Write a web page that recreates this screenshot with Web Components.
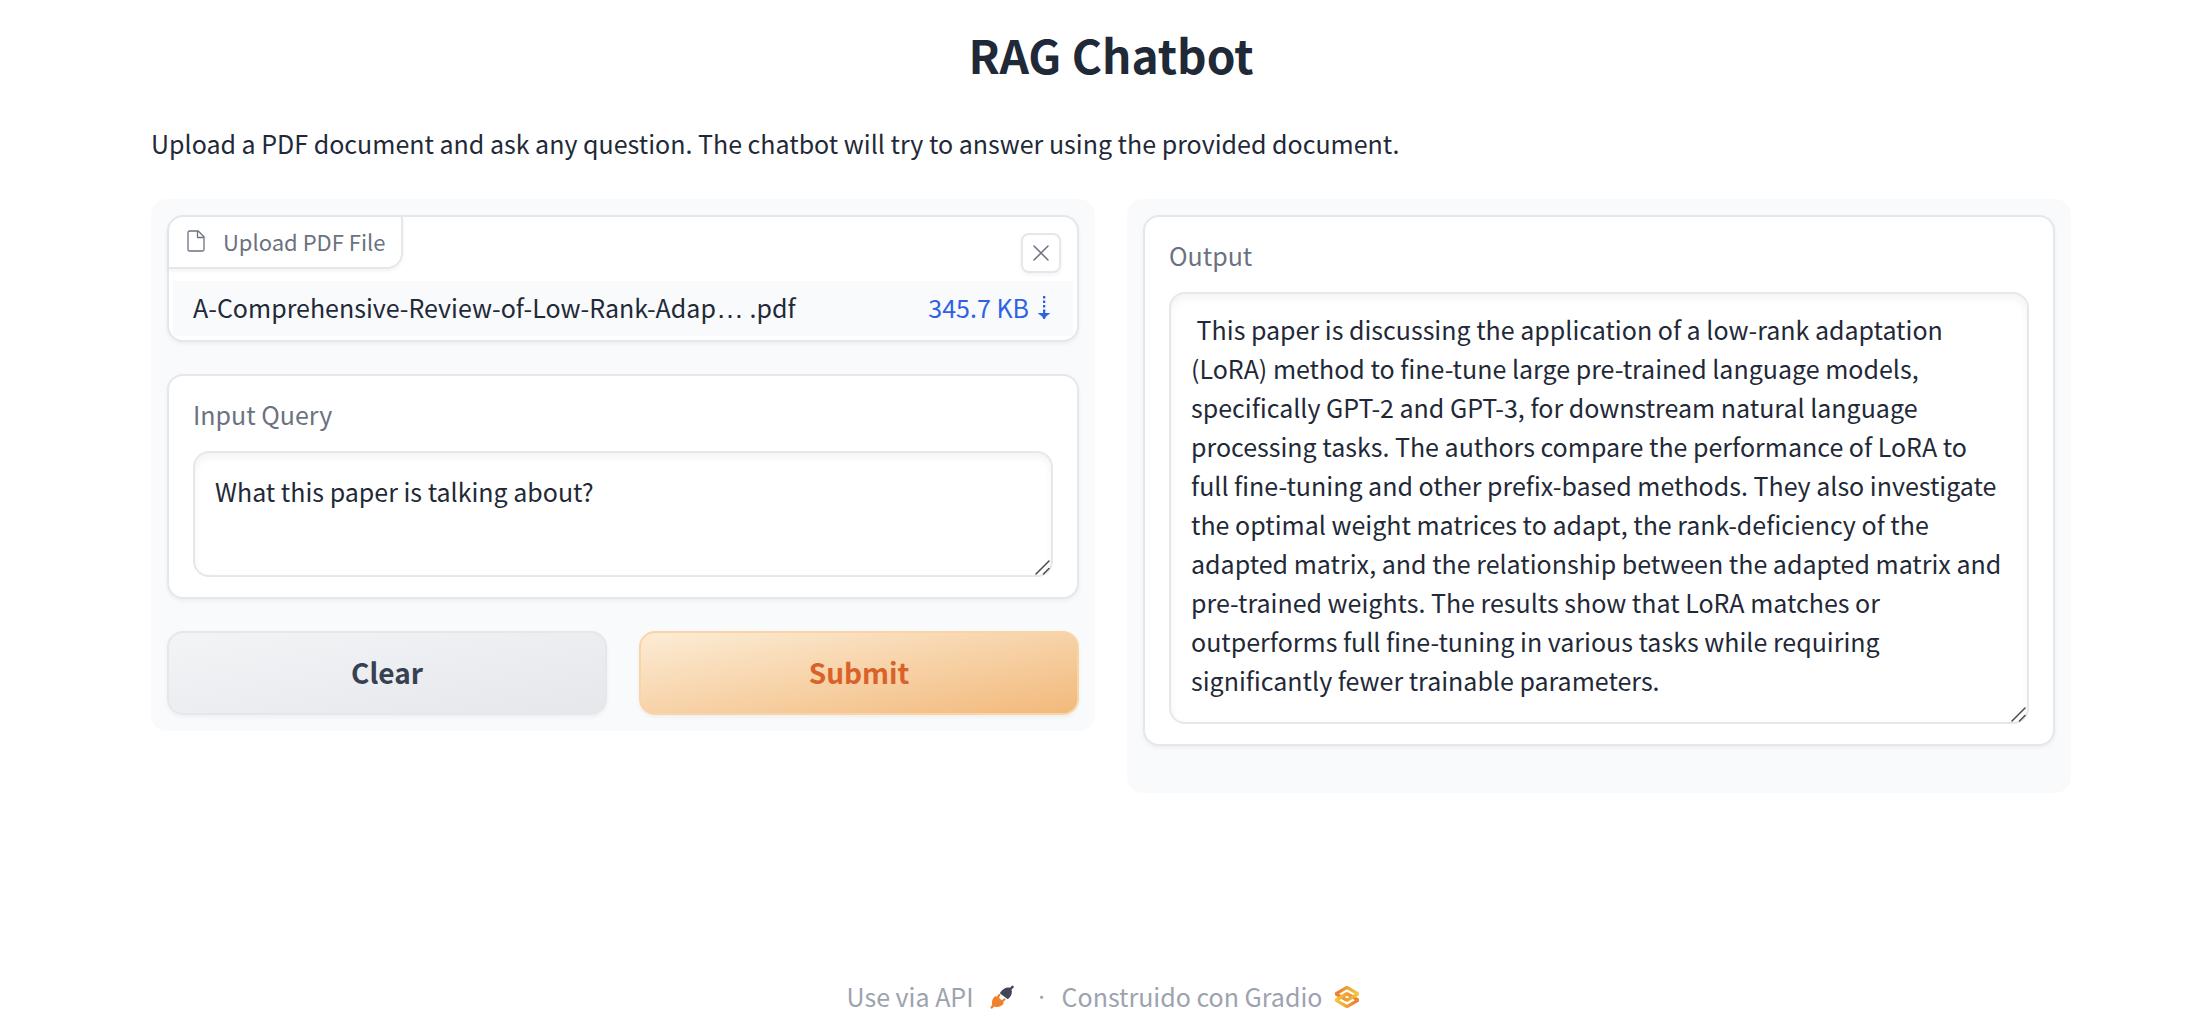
<!DOCTYPE html>
<html lang="en">
<head>
<meta charset="utf-8">
<title>RAG Chatbot</title>
<style>
  html { height: 100%; }
  body {
    margin: 0;
    min-height: 100%;
    background: #fff;
    color: #1f2937;
    font: 400 25px/39px "Noto Sans CJK SC", "Noto Sans", sans-serif;
    --line: #e5e7eb;
    --muted: #6b7280;
    --radius: 16px;
  }
</style>
</head>
<body>
<rag-app></rag-app>
<script>
const define = (name, html, setup) => {
  const template = document.createElement('template');
  template.innerHTML = '<style>*{box-sizing:border-box}</style>' + html;
  customElements.define(name, class extends HTMLElement {
    connectedCallback() {
      if (this.shadowRoot) return;
      this.attachShadow({ mode: 'open' }).append(template.content.cloneNode(true));
      if (setup) setup(this, this.shadowRoot);
    }
  });
};

define('rag-panel', `
  <style>
    :host { display: flex; flex-direction: column; gap: 32px; flex: 1 1 0; min-width: 0; box-sizing: border-box;
            padding: 16px; background: #f9fafc; border-radius: var(--radius); }
  </style>
  <slot></slot>`);

define('rag-card', `
  <style>
    :host { display: block; box-sizing: border-box; background: #fff; border: 2px solid var(--line);
            border-radius: var(--radius); box-shadow: 0 2px 4px rgba(0,0,0,.05); }
  </style>
  <slot></slot>`);

define('rag-file', `
  <style>
    :host { display: block; }
    .top { display: flex; justify-content: space-between; align-items: flex-start; height: 64px; }
    .label { display: flex; align-items: center; gap: 18px; height: 52px; padding: 0 16px 2px 18px;
             font-size: 22px; line-height: 32px; color: var(--muted);
             border: solid var(--line); border-width: 0 2px 2px 0; border-radius: 14px 0 var(--radius) 0;
             box-shadow: 0 2px 4px rgba(0,0,0,.05); }
    .close { display: grid; place-items: center; width: 40px; height: 40px; margin: 16px 16px 0 0; padding: 0;
             background: #fff; border: 2px solid var(--line); border-radius: 8px; color: var(--muted);
             box-shadow: 0 2px 4px rgba(0,0,0,.05); }
    .row { display: flex; justify-content: space-between; align-items: center; height: 55px;
           margin: 0 4px 4px; padding: 0 22px 2px 20px; background: #f9fafc; }
    .dots { font: 28px/1 "Liberation Sans", sans-serif; }
    a { display: flex; align-items: center; gap: 8px; color: #2f62e3; text-decoration: none; }
    svg { display: block; }
  </style>
  <rag-card>
    <div class="top">
      <div class="label">
        <svg width="18" height="22" viewBox="0 0 18 22" fill="none" stroke="currentColor" stroke-width="1.3" stroke-linejoin="round"><path d="M2.500 1h8.700L17 6.800v12.700a1.500 1.500 0 0 1-1.500 1.500h-13A1.500 1.500 0 0 1 1 19.500v-17A1.500 1.500 0 0 1 2.500 1Z"/><path d="M10.500 1.200v6.300h6.300"/></svg>
        <span>Upload PDF File</span>
      </div>
      <button class="close" type="button" aria-label="Clear file">
        <svg width="16" height="16" viewBox="0 0 16 16" stroke="currentColor" stroke-width="1.500" stroke-linecap="round"><path d="M1 1l14 14M15 1L1 15"/></svg>
      </button>
    </div>
    <div class="row">
      <span>A-Comprehensive-Review-of-Low-Rank-Adap<span class="dots">…</span> .pdf</span>
      <a href="#download">345.7 KB
        <svg width="14" height="24" viewBox="0 0 14 24" fill="currentColor"><path d="M6 0h2.300v2.500H6zM6 4.500h2.300V7H6zM6 9h2.300v2.500H6zM6 13.500h2.300V18H6zM1 17h12q0 1-2.500 2.200Q8.500 20.300 8 23H6.300Q5.800 20.300 3.500 19.200 1 18 1 17Z"/></svg>
      </a>
    </div>
  </rag-card>`);

define('rag-textbox', `
  <style>
    :host { display: block; --pad: 19px 20px 25px; }
    .body { padding: 19px 24px 20px; }
    label { display: block; margin-bottom: 17px; color: var(--muted); }
    .box { position: relative; }
    textarea { display: block; width: 100%; margin: 0; padding: var(--pad); resize: none; overflow: hidden; outline: 0;
               font: inherit; color: inherit; background: #fff; border: 2px solid var(--line);
               border-radius: var(--radius); box-shadow: inset 0 4px 8px rgba(0,0,0,.05); }
    svg { position: absolute; right: 3px; bottom: 2px; }
  </style>
  <rag-card>
    <div class="body">
      <label for="field"></label>
      <div class="box">
        <textarea id="field" spellcheck="false"></textarea>
        <svg width="15" height="15" viewBox="0 0 15 15" stroke="#4b4b4b" stroke-width="1.500" stroke-linecap="round"><path d="M1 14L14 1M8.500 14L14 8.500"/></svg>
      </div>
    </div>
  </rag-card>`, (host, root) => {
    root.querySelector('label').textContent = host.getAttribute('label');
    const area = root.querySelector('textarea');
    area.rows = Number(host.getAttribute('rows'));
    area.textContent = host.getAttribute('value');
    area.readOnly = host.hasAttribute('readonly');
  });

define('rag-button', `
  <style>
    :host { display: block; flex: 1 1 0; }
    button { display: block; width: 100%; height: 84px; padding: 0 0 2px; font: inherit; font-size: 28px; font-weight: 700;
             color: #374151; background: linear-gradient(to bottom right, #f3f4f6, #e5e7eb);
             border: 2px solid var(--line); border-radius: var(--radius); box-shadow: 0 2px 4px rgba(0,0,0,.05); }
    :host([primary]) button { color: #d9622b; border-color: #fad4a5;
             background: linear-gradient(to bottom right, #fcecd5, #f2b97b); }
  </style>
  <button type="button"><slot></slot></button>`);

define('rag-footer', `
  <style>
    :host { display: flex; justify-content: center; align-items: center; color: #9ca3af; }
    a { display: flex; align-items: center; color: inherit; text-decoration: none; }
    .api { gap: 16px; }
    .built { gap: 9px; }
    .dot { width: 48px; padding-left: 8px; text-align: center; font-family: "Open Sans", sans-serif; }
    svg { display: block; }
  </style>
  <a class="api" href="#api">Use via API
    <svg width="24" height="24" viewBox="0 0 24 24" stroke-linecap="round" stroke-linejoin="round">
      <path fill="#3f4658" d="M10.300 7.400C12.500 3.800 16.500 1.600 20 2.700L21.700 1a1.200 1.200 0 0 1 1.700 1.700L21.500 4.400c1 3.400-.2 7.200-3.200 9.300a1.200 1.200 0 0 1-1.500-.1L10.400 8.800a1.200 1.200 0 0 1-.1-1.400Z"/>
      <path fill="#f0812c" d="M1.200 23.500a1.200 1.200 0 0 1-.3-1.900L2.200 20C1.400 16.500 2.500 13 5.600 11l1.300.7 1.600-2.500a1.100 1.100 0 0 1 1.800 1.200l-1.400 2.300 2.900 2.600 2-1.800a1.100 1.100 0 0 1 1.500 1.600l-2.100 2 .5 1.500c-2.500 3.200-6 4-9.500 2.800L2.700 23a1.200 1.200 0 0 1-1.500.5Z"/>
    </svg>
  </a>
  <span class="dot">·</span>
  <a class="built" href="#gradio">Construido con Gradio
    <svg width="32" height="32" viewBox="0 0 576 576" fill="none" stroke-width="59" stroke-linejoin="bevel">
      <defs>
        <linearGradient id="a" x1="60" y1="341" x2="429" y2="341" gradientUnits="userSpaceOnUse"><stop stop-color="#f5cf3a"/><stop offset="1" stop-color="#ee8130"/></linearGradient>
        <linearGradient id="b" x1="513" y1="231" x2="143" y2="231" gradientUnits="userSpaceOnUse"><stop stop-color="#f5cf3a"/><stop offset="1" stop-color="#ee8130"/></linearGradient>
      </defs>
      <path stroke="url(#a)" d="M287.500 229L86 344.500L287.500 460L489 344.500L287.500 229Z"/>
      <path stroke="url(#b)" d="M287.500 116L86 231.500L287.500 347L489 231.500L287.500 116Z"/>
      <path stroke="url(#a)" d="M86 344L288 229"/>
    </svg>
  </a>`);

define('rag-app', `
  <style>
    :host { display: flex; flex-direction: column; min-height: 100vh; box-sizing: border-box; padding: 18px 139px 6px; }
    .content { padding-left: 12px; }
    h1 { margin: 0; text-align: center; font-size: 46px; line-height: 72px; font-weight: 700; }
    p { margin: 34px 0 36px; }
    main { display: flex; align-items: flex-start; gap: 32px; }
    .actions { display: flex; gap: 32px; }
    .out { --pad: 16px 20px 22px; margin-bottom: 31px; }
    rag-footer { margin-top: auto; }
  </style>
  <div class="content">
    <h1>RAG Chatbot</h1>
    <p>Upload a PDF document and ask any question. The chatbot will try to answer using the provided document.</p>
    <main>
      <rag-panel>
        <rag-file></rag-file>
        <rag-textbox label="Input Query" rows="2" value="What this paper is talking about?"></rag-textbox>
        <div class="actions">
          <rag-button>Clear</rag-button>
          <rag-button primary>Submit</rag-button>
        </div>
      </rag-panel>
      <rag-panel>
        <rag-textbox class="out" readonly label="Output" rows="10" value=" This paper is discussing the application of a low-rank adaptation (LoRA) method to fine-tune large pre-trained language models, specifically GPT-2 and GPT-3, for downstream natural language processing tasks. The authors compare the performance of LoRA to full fine-tuning and other prefix-based methods. They also investigate the optimal weight matrices to adapt, the rank-deficiency of the adapted matrix, and the relationship between the adapted matrix and pre-trained weights. The results show that LoRA matches or outperforms full fine-tuning in various tasks while requiring significantly fewer trainable parameters."></rag-textbox>
      </rag-panel>
    </main>
  </div>
  <rag-footer></rag-footer>`);
</script>
</body>
</html>
